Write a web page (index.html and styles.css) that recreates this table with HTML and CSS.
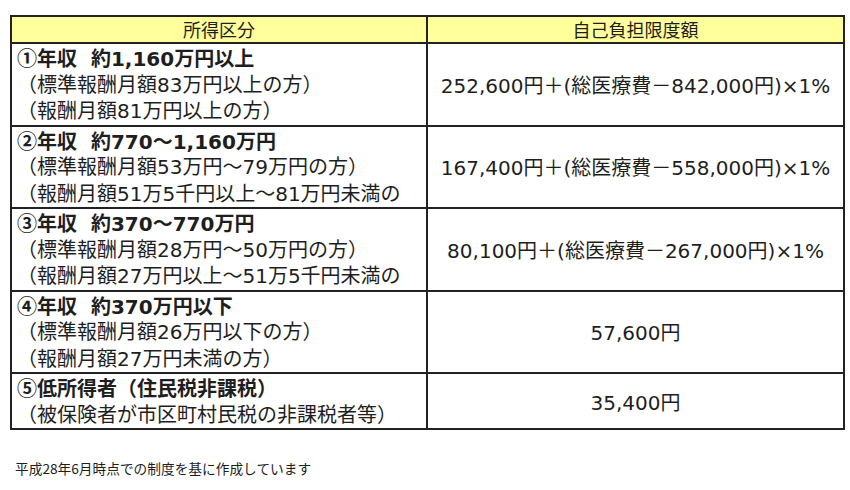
FILE: index.html
```html
<!DOCTYPE html>
<html lang="ja">
<head>
<meta charset="utf-8">
<link rel="stylesheet" href="styles.css">
</head>
<body>
<div class="page">
  <table class="limits">
    <colgroup>
      <col class="col-income">
      <col class="col-limit">
    </colgroup>
    <thead>
      <tr class="head-row">
        <th>所得区分</th>
        <th>自己負担限度額</th>
      </tr>
    </thead>
    <tbody>
      <tr>
        <td class="income">
          <div class="line bold"><span class="num">①</span>年収&nbsp;&nbsp;約1,160万円以上</div>
          <div class="line">（標準報酬月額83万円以上の方）</div>
          <div class="line">（報酬月額81万円以上の方）</div>
        </td>
        <td class="limit">252,600円＋(総医療費－842,000円)×1%</td>
      </tr>
      <tr>
        <td class="income">
          <div class="line bold"><span class="num">②</span>年収&nbsp;&nbsp;約770～1,160万円</div>
          <div class="line">（標準報酬月額53万円～79万円の方）</div>
          <div class="line">（報酬月額51万5千円以上～81万円未満の</div>
        </td>
        <td class="limit">167,400円＋(総医療費－558,000円)×1%</td>
      </tr>
      <tr>
        <td class="income">
          <div class="line bold"><span class="num">③</span>年収&nbsp;&nbsp;約370～770万円</div>
          <div class="line">（標準報酬月額28万円～50万円の方）</div>
          <div class="line">（報酬月額27万円以上～51万5千円未満の</div>
        </td>
        <td class="limit">80,100円＋(総医療費－267,000円)×1%</td>
      </tr>
      <tr>
        <td class="income">
          <div class="line bold"><span class="num">④</span>年収&nbsp;&nbsp;約370万円以下</div>
          <div class="line">（標準報酬月額26万円以下の方）</div>
          <div class="line">（報酬月額27万円未満の方）</div>
        </td>
        <td class="limit">57,600円</td>
      </tr>
      <tr>
        <td class="income">
          <div class="line bold"><span class="num">⑤</span>低所得者（住民税非課税）</div>
          <div class="line">（被保険者が市区町村民税の非課税者等）</div>
        </td>
        <td class="limit">35,400円</td>
      </tr>
    </tbody>
  </table>
  <p class="note">平成28年6月時点での制度を基に作成しています</p>
</div>
</body>
</html>
```
FILE: styles.css
```css
html, body {
  margin: 0;
  padding: 0;
  background: #ffffff;
}
body {
  font-family: "DejaVu Sans", "Noto Sans CJK JP", sans-serif;
  color: #1e1e1e;
}
.page {
  padding: 15px 0 0 10px;
}
.limits {
  border-collapse: collapse;
  width: 833px;
  table-layout: fixed;
}
.col-income { width: 416px; }
.col-limit { width: 417px; }
.limits th,
.limits td {
  border: 2px solid #222222;
}
.head-row th {
  background: #ffff9c;
  font-family: "Noto Sans CJK JP", sans-serif;
  font-weight: normal;
  font-size: 18px;
  height: 23px;
  line-height: 23px;
  padding: 1px 0 1px 0;
  text-align: center;
}
.income {
  padding: 1px 0 0 5px;
  vertical-align: top;
  white-space: nowrap;
}
.line {
  font-size: 20px;
  line-height: 26.5px;
  height: 26.5px;
  white-space: nowrap;
}
.bold {
  font-weight: bold;
}
.num {
  font-family: "Noto Sans CJK JP", sans-serif;
  font-weight: bold;
}
.limit {
  font-size: 20px;
  text-align: center;
  vertical-align: middle;
  white-space: nowrap;
  padding: 0;
}
.note {
  font-family: "Noto Sans CJK JP", sans-serif;
  margin: 28px 0 0 5px;
  font-size: 13.7px;
  line-height: 20px;
}
```
